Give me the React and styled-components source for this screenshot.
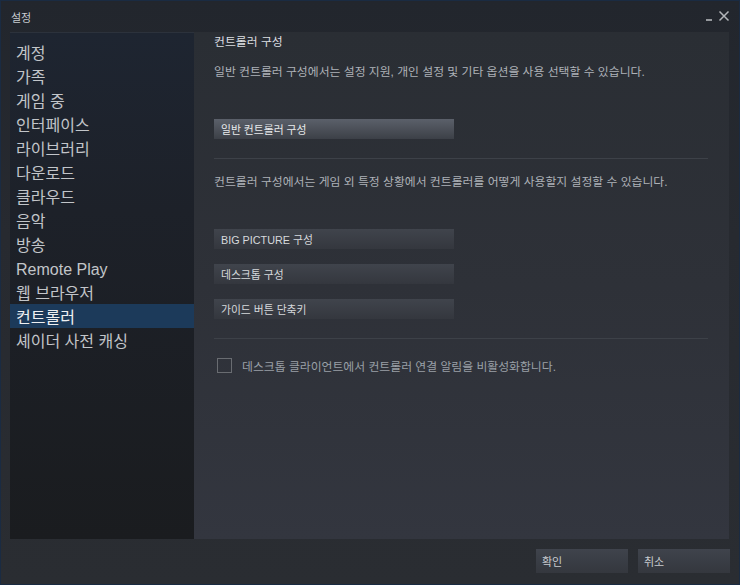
import styled, { createGlobalStyle } from 'styled-components'

const GlobalStyle = createGlobalStyle`
  html, body {
    margin: 0;
    padding: 0;
    background: #1b1d21;
  }
  * {
    box-sizing: border-box;
  }
`

const FONT = `"Liberation Sans", "Noto Sans CJK KR", sans-serif`

const menuItems = [
  '계정',
  '가족',
  '게임 중',
  '인터페이스',
  '라이브러리',
  '다운로드',
  '클라우드',
  '음악',
  '방송',
  'Remote Play',
  '웹 브라우저',
  '컨트롤러',
  '셰이더 사전 캐싱',
]

const App = () => {
  return (
    <>
      <GlobalStyle />
      <Window>
        <TitleBar>
          <TitleText>설정</TitleText>
          <WindowControls>
            <svg width="8" height="10" viewBox="0 0 8 10">
              <path d="M1 9h6" stroke="#b3b6ba" strokeWidth="1.6" />
            </svg>
            <svg width="12" height="12" viewBox="0 0 12 12">
              <path d="M1.5 1.5l9 9M10.5 1.5l-9 9" stroke="#b3b6ba" strokeWidth="1.5" />
            </svg>
          </WindowControls>
        </TitleBar>

        <Body>
          <Sidebar>
            {menuItems.map((item) => (
              <MenuItem key={item} $active={item === '컨트롤러'}>
                {item}
              </MenuItem>
            ))}
          </Sidebar>

          <Content>
            <SectionTitle>컨트롤러 구성</SectionTitle>
            <Description>일반 컨트롤러 구성에서는 설정 지원, 개인 설정 및 기타 옵션을 사용 선택할 수 있습니다.</Description>
            <ConfigButton $focused $top={40}>
              일반 컨트롤러 구성
            </ConfigButton>

            <Divider />

            <Description>컨트롤러 구성에서는 게임 외 특정 상황에서 컨트롤러를 어떻게 사용할지 설정할 수 있습니다.</Description>
            <ConfigButton $top={40}>BIG PICTURE 구성</ConfigButton>
            <ConfigButton $top={15}>데스크톱 구성</ConfigButton>
            <ConfigButton $top={15}>가이드 버튼 단축키</ConfigButton>

            <Divider />

            <CheckRow>
              <CheckBox />
              <CheckLabel>데스크톱 클라이언트에서 컨트롤러 연결 알림을 비활성화합니다.</CheckLabel>
            </CheckRow>
          </Content>
        </Body>

        <Footer>
          <FooterButton>확인</FooterButton>
          <FooterButton>취소</FooterButton>
        </Footer>
      </Window>
    </>
  )
}

export default App

const Window = styled.div`
  width: 740px;
  height: 585px;
  display: flex;
  flex-direction: column;
  border: 1px solid #1a2b42;
  background: linear-gradient(to bottom, #22262d 0%, #272a30 40%, #2a2d32 100%);
  font-family: ${FONT};
  overflow: hidden;
`

const TitleBar = styled.div`
  height: 31px;
  flex-shrink: 0;
  display: flex;
  align-items: center;
  justify-content: space-between;
  padding: 0 9px 0 10px;
`

const TitleText = styled.span`
  font-size: 11px;
  color: #c9cdd1;
`

const WindowControls = styled.div`
  display: flex;
  align-items: center;
  gap: 5px;
  margin-top: -2px;
`

const Body = styled.div`
  display: flex;
  height: 507px;
  padding: 0 10px 0 9px;
`

const Sidebar = styled.div`
  width: 184px;
  flex-shrink: 0;
  padding-top: 7px;
  border-top: 1px solid #2c323c;
  background: linear-gradient(to bottom, #1e2531 0%, #1d2129 35%, #1a1c1f 100%);
`

const MenuItem = styled.div`
  height: 24px;
  line-height: 28px;
  padding-left: 6px;
  font-size: 16px;
  color: ${(p) => (p.$active ? '#eef0f2' : '#c2c5c9')};
  background: ${(p) => (p.$active ? '#1c3a5a' : 'transparent')};
  white-space: nowrap;
  overflow: hidden;
`

const Content = styled.div`
  flex: 1;
  padding: 3px 21px 0 20px;
  background: linear-gradient(to bottom, #2a2e34 0%, #2e3138 50%, #33363f 100%);
`

const SectionTitle = styled.div`
  font-size: 11.85px;
  line-height: 14px;
  color: #dcdfe2;
`

const Description = styled.div`
  margin-top: 16px;
  font-size: 11.85px;
  line-height: 14px;
  color: #aeb2b8;
  white-space: nowrap;
`

const ConfigButton = styled.div`
  width: 240px;
  height: 20px;
  margin-top: ${(p) => p.$top}px;
  padding-left: 7px;
  display: flex;
  align-items: center;
  font-size: 10.8px;
  color: ${(p) => (p.$focused ? '#e8eaec' : '#d6d9dc')};
  background: ${(p) =>
    p.$focused
      ? 'linear-gradient(to bottom, #5b606a 0%, #3c4047 100%)'
      : 'linear-gradient(to bottom, #40444c 0%, #34373e 100%)'};
`

const Divider = styled.div`
  height: 1px;
  margin-top: 19px;
  background: #3d4148;
`

const CheckRow = styled.div`
  margin-top: 18px;
  padding-left: 3px;
  display: flex;
  align-items: center;
  gap: 10px;
`

const CheckBox = styled.div`
  width: 15px;
  height: 15px;
  border: 1px solid #696c71;
`

const CheckLabel = styled.span`
  font-size: 11.85px;
  color: #9aa0a7;
`

const Footer = styled.div`
  flex: 1;
  display: flex;
  justify-content: flex-end;
  align-items: flex-start;
  gap: 10px;
  padding: 10px 9px 0 0;
`

const FooterButton = styled.div`
  width: 92px;
  height: 24px;
  padding-left: 6px;
  display: flex;
  align-items: center;
  font-size: 11px;
  color: #c9ccd0;
  background: linear-gradient(to bottom, #3f434c 0%, #34373e 100%);
`
